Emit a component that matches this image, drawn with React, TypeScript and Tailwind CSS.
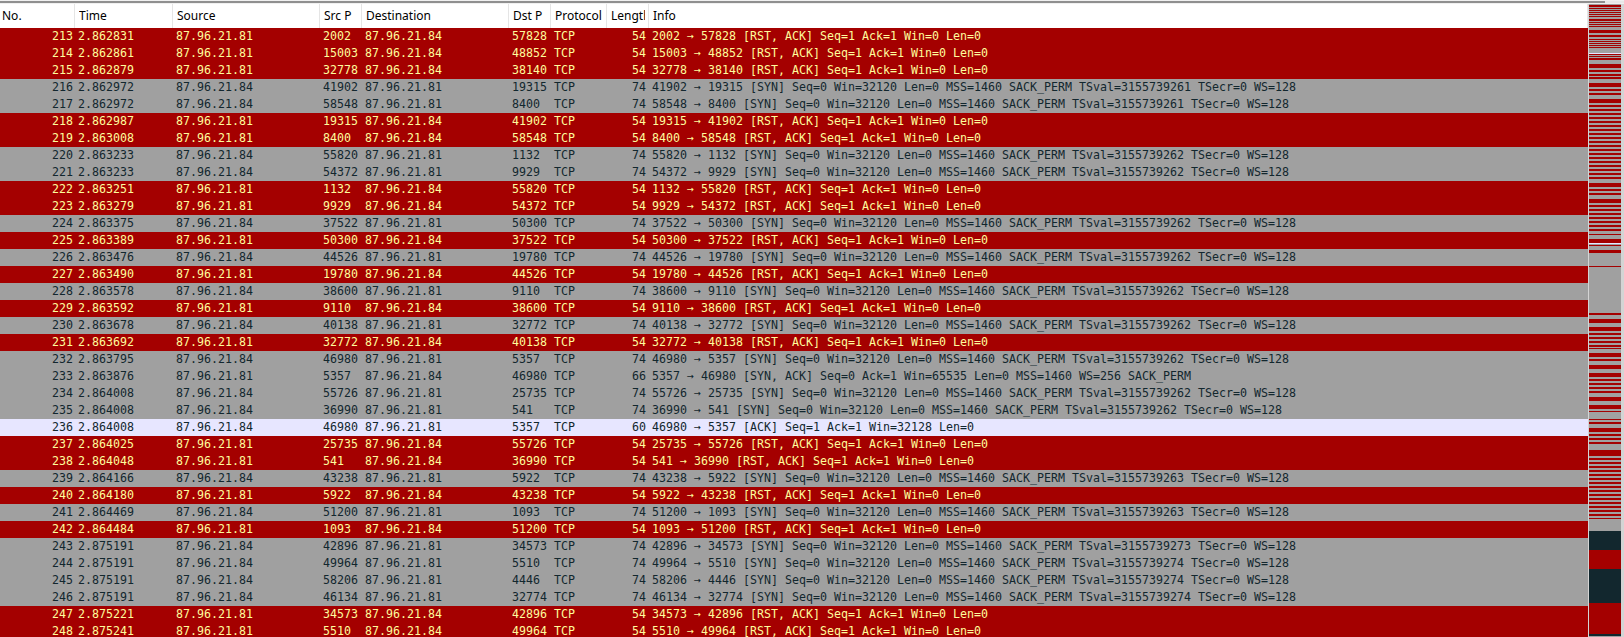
import React from "react";

type Kind = "R" | "S" | "SA" | "A";
type Packet = [number, string, Kind, number, number, number?];

const packets: Packet[] = [
  [213, "2.862831", "R", 2002, 57828],
  [214, "2.862861", "R", 15003, 48852],
  [215, "2.862879", "R", 32778, 38140],
  [216, "2.862972", "S", 41902, 19315, 3155739261],
  [217, "2.862972", "S", 58548, 8400, 3155739261],
  [218, "2.862987", "R", 19315, 41902],
  [219, "2.863008", "R", 8400, 58548],
  [220, "2.863233", "S", 55820, 1132, 3155739262],
  [221, "2.863233", "S", 54372, 9929, 3155739262],
  [222, "2.863251", "R", 1132, 55820],
  [223, "2.863279", "R", 9929, 54372],
  [224, "2.863375", "S", 37522, 50300, 3155739262],
  [225, "2.863389", "R", 50300, 37522],
  [226, "2.863476", "S", 44526, 19780, 3155739262],
  [227, "2.863490", "R", 19780, 44526],
  [228, "2.863578", "S", 38600, 9110, 3155739262],
  [229, "2.863592", "R", 9110, 38600],
  [230, "2.863678", "S", 40138, 32772, 3155739262],
  [231, "2.863692", "R", 32772, 40138],
  [232, "2.863795", "S", 46980, 5357, 3155739262],
  [233, "2.863876", "SA", 5357, 46980],
  [234, "2.864008", "S", 55726, 25735, 3155739262],
  [235, "2.864008", "S", 36990, 541, 3155739262],
  [236, "2.864008", "A", 46980, 5357],
  [237, "2.864025", "R", 25735, 55726],
  [238, "2.864048", "R", 541, 36990],
  [239, "2.864166", "S", 43238, 5922, 3155739263],
  [240, "2.864180", "R", 5922, 43238],
  [241, "2.864469", "S", 51200, 1093, 3155739263],
  [242, "2.864484", "R", 1093, 51200],
  [243, "2.875191", "S", 42896, 34573, 3155739273],
  [244, "2.875191", "S", 49964, 5510, 3155739274],
  [245, "2.875191", "S", 58206, 4446, 3155739274],
  [246, "2.875191", "S", 46134, 32774, 3155739274],
  [247, "2.875221", "R", 34573, 42896],
  [248, "2.875241", "R", 5510, 49964],
];

const infoFor = ([, , kind, sp, dp, ts]: Packet) => {
  const ports = `${sp} → ${dp}`;
  if (kind === "R") return `${ports} [RST, ACK] Seq=1 Ack=1 Win=0 Len=0`;
  if (kind === "SA") return `${ports} [SYN, ACK] Seq=0 Ack=1 Win=65535 Len=0 MSS=1460 WS=256 SACK_PERM`;
  if (kind === "A") return `${ports} [ACK] Seq=1 Ack=1 Win=32128 Len=0`;
  return `${ports} [SYN] Seq=0 Win=32120 Len=0 MSS=1460 SACK_PERM TSval=${ts} TSecr=0 WS=128`;
};

const lengthFor: Record<Kind, number> = { R: 54, S: 74, SA: 66, A: 60 };

const rowColor: Record<Kind, string> = {
  R: "bg-[#a40000] text-[#fffc9c]",
  S: "bg-[#a0a0a0] text-[#12272e]",
  SA: "bg-[#a0a0a0] text-[#12272e]",
  A: "bg-[#e7e6ff] text-[#12272e]",
};

const headers = [
  { label: "No.", cls: "w-[75px] pl-[2px] pr-[3px]" },
  { label: "Time", cls: "w-[98px] pl-[4px] pr-[3px]" },
  { label: "Source", cls: "w-[147px] pl-[4px] pr-[3px]" },
  { label: "Src P", cls: "w-[42px] pl-[4px] pr-[3px]" },
  { label: "Destination", cls: "w-[147px] pl-[4px] pr-[3px]" },
  { label: "Dst P", cls: "w-[42px] pl-[4px] pr-[3px]" },
  { label: "Protocol", cls: "w-[56px] pl-[4px] pr-[3px]" },
  { label: "Length", cls: "w-[42px] pl-[4px] pr-[3px]" },
  { label: "Info", cls: "flex-1 pl-[4px] pr-[3px]" },
];

// packet map marks in page y: [from, to, colour]; what lies between stays gray
const r = "bg-[#a40000]";
const d = "bg-[#12272e]";
const w = "bg-[#e7e6ff]";

const every4 = (from: number, to: number): [number, number, string][] => {
  const out: [number, number, string][] = [];
  for (let y = from; y <= to; y += 4) out.push([y, y + 2, r]);
  return out;
};

const marks: [number, number, string][] = [
  [6, 8, r], [9, 10, r], [11, 12, r], [13, 14, r], [15, 16, r], [17, 18, r],
  [20, 22, r], [23, 24, r], [25, 26, r], [27, 28, r], [31, 34, r],
  [36, 38, r], [40, 41, r], [42, 43, r], [44, 45, r], [46, 47, r], [48, 49, r],
  [54, 55, w], [55, 56, r], [57, 58, r], [59, 61, r], [65, 69, r], [71, 73, r], [75, 77, r], [78, 80, r],
  [84, 88, r], [90, 92, r], [94, 96, r], [100, 104, r], [106, 108, r],
  ...every4(110, 178),
  [184, 188, r], [190, 192, r], [194, 196, r], [200, 204, r], [206, 208, r],
  ...every4(210, 230),
  [235, 236, r], [240, 244, r], [244, 245, w], [246, 247, r], [251, 254, r], [267, 268, r],
  [314, 316, r], [320, 324, r], [328, 332, r], [334, 336, r], [338, 340, r], [342, 344, r], [346, 348, r], [349, 350, r],
  [354, 358, r], [360, 362, r], [366, 370, r], [374, 378, r],
  ...every4(380, 392),
  [398, 402, r], [406, 410, r], [412, 413, r], [420, 421, r], [423, 425, r], [429, 433, r], [435, 437, r],
  [439, 441, r], [443, 445, r], [451, 457, r],
  ...every4(459, 515),
  [519, 520, r],
  [532, 551, d], [551, 570, r], [570, 604, d], [604, 635, r], [635, 637, d],
];

const MapStripes = () => {
  let y = 5;
  const parts: React.ReactNode[] = [];
  marks.forEach(([from, to, c]) => {
    if (from > y) parts.push(<div key={`gap-${from}`} style={{ height: from - y }} />);
    parts.push(<div key={from} className={c} style={{ height: to - from }} />);
    y = to;
  });
  return <div className="flex flex-col w-full h-full bg-[#a0a0a0] overflow-hidden">{parts}</div>;
};

const Row = ({ p }: { p: Packet }) => {
  const [no, time, kind, sp, dp] = p;
  const fromServer = kind === "R" || kind === "SA";
  return (
    <div className={`flex h-[17px] leading-[17px] whitespace-pre ${rowColor[kind]}`}>
      <div className="w-[73px] text-right">{no}</div>
      <div className="w-[103px] pl-[5px]">{time}</div>
      <div className="w-[147px]">87.96.21.{fromServer ? "81" : "84"}</div>
      <div className="w-[42px]">{sp}</div>
      <div className="w-[147px]">87.96.21.{fromServer ? "84" : "81"}</div>
      <div className="w-[42px]">{dp}</div>
      <div className="w-[60px]">TCP</div>
      <div className="w-[32px] text-right">{lengthFor[kind]}</div>
      <div className="flex-1 pl-[6px] overflow-hidden">{infoFor(p)}</div>
    </div>
  );
};

export default function App() {
  return (
    <div className="h-[637px] w-[1624px] overflow-hidden bg-white flex flex-col">
      <div className="h-[4px] shrink-0 flex flex-col">
        <div className="h-[1px] bg-[#f0f0f0]" />
        <div className="flex h-[2px] bg-[#e8e8e8]">
          <div className="w-[1605px] bg-[#8f8f8f]" />
        </div>
        <div className="h-[1px] bg-[#f0f0f0]" />
      </div>
      <div className="flex flex-1 min-h-0">
        <div className="w-[1588px] shrink-0 overflow-hidden font-['DejaVu_Sans_Mono',monospace] text-[11.63px]">
          <div className="flex h-[24px] items-center bg-white font-['Noto_Sans',sans-serif] text-[12px] text-black">
            {headers.map((h) => (
              <div key={h.label} className={`h-full leading-[23px] border-r border-[#e5e5e5] whitespace-nowrap ${h.cls}`}>
                <div className="overflow-hidden">{h.label}</div>
              </div>
            ))}
          </div>
          {packets.map((p) => (
            <Row key={p[0]} p={p} />
          ))}
        </div>
        <div className="flex-1 bg-[#d4d4d4] pl-[1px] pr-[3px] overflow-hidden">
          <MapStripes />
        </div>
      </div>
    </div>
  );
}
